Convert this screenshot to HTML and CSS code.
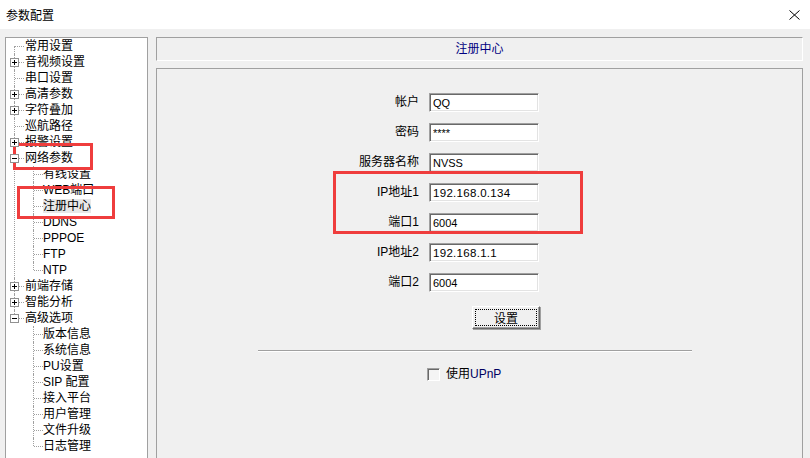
FILE: index.html
```html
<!DOCTYPE html>
<html lang="zh-CN">
<head>
    <meta charset="UTF-8">
    <title>参数配置</title>
    <link rel="stylesheet" href="styles.css">
</head>
<body>
    <div class="titlebar">
        <span class="title">参数配置</span>
        <svg class="close" width="11" height="10" viewBox="0 0 11 10">
            <path d="M0.5 0.5 L10.5 9.5 M10.5 0.5 L0.5 9.5" stroke="#000" stroke-width="1" fill="none"/>
        </svg>
    </div>
    <div class="content">
        <div class="tree-box">
            <ul class="tree">
                <li>常用设置</li>
                <li><span class="tog plus"></span>音视频设置</li>
                <li>串口设置</li>
                <li><span class="tog plus"></span>高清参数</li>
                <li><span class="tog plus"></span>字符叠加</li>
                <li>巡航路径</li>
                <li><span class="tog plus"></span>报警设置</li>
                <li><span class="tog"></span>网络参数
                    <ul>
                        <li>有线设置</li>
                        <li>WEB端口</li>
                        <li><span class="sel">注册中心</span></li>
                        <li>DDNS</li>
                        <li>PPPOE</li>
                        <li>FTP</li>
                        <li>NTP</li>
                    </ul>
                </li>
                <li><span class="tog plus"></span>前端存储</li>
                <li><span class="tog plus"></span>智能分析</li>
                <li><span class="tog"></span>高级选项
                    <ul>
                        <li>版本信息</li>
                        <li>系统信息</li>
                        <li>PU设置</li>
                        <li>SIP 配置</li>
                        <li>接入平台</li>
                        <li>用户管理</li>
                        <li>文件升级</li>
                        <li>日志管理</li>
                    </ul>
                </li>
            </ul>
        </div>
        <div class="right">
            <div class="header">注册中心</div>
            <div class="panel">
                <div class="form">
                    <label>帐户</label><input type="text" value="QQ" readonly>
                    <label>密码</label><input type="text" value="****" readonly>
                    <label>服务器名称</label><input type="text" value="NVSS" readonly>
                    <label>IP地址1</label><input type="text" class="ip" value="192.168.0.134" readonly>
                    <label>端口1</label><input type="text" value="6004" readonly>
                    <label>IP地址2</label><input type="text" class="ip" value="192.168.1.1" readonly>
                    <label>端口2</label><input type="text" value="6004" readonly>
                    <button class="btn"><span>设置</span></button>
                </div>
                <div class="sep"></div>
                <div class="check-row">
                    <span class="checkbox"></span>
                    <span>使用<span class="en">UPnP</span></span>
                </div>
            </div>
        </div>
    </div>

    <div class="mark mark-net"></div>
    <div class="mark mark-reg"></div>
    <div class="mark mark-ip"></div>
</body>
</html>
```

FILE: styles.css
```css
body {
    margin: 0;
    height: 458px;
    overflow: hidden;
    position: relative;
    background: #f0f0f0;
    font-family: "Liberation Sans", "Noto Sans CJK SC", sans-serif;
    font-size: 12px;
    color: #000;
}
.titlebar {
    height: 29px;
    background: #fff;
    display: flex;
    align-items: center;
    justify-content: space-between;
    padding: 0 10px 0 6px;
}
.title {
    font-size: 12px;
}
.content {
    display: flex;
    gap: 8px;
    padding: 8px 0 0 5px;
}
.tree-box {
    width: 143px;
    height: 421px;
    box-sizing: border-box;
    background: #fff;
    border: 1px solid #a0a0a0;
    border-bottom: none;
}
.tree, .tree ul {
    list-style: none;
    margin: 0;
    padding: 0;
}
.tree li {
    position: relative;
    padding-left: 19px;
    line-height: 16px;
    white-space: nowrap;
}
.tree ul li {
    padding-left: 18px;
}
.tree li::before {
    content: "";
    position: absolute;
    left: 8px;
    top: 0;
    bottom: 0;
    border-left: 1px dotted #a0a0a0;
}
.tree > li:first-child::before {
    top: 8px;
}
.tree li:last-child::before {
    bottom: auto;
    height: 8px;
}
.tree li::after {
    content: "";
    position: absolute;
    left: 9px;
    top: 8px;
    width: 9px;
    border-top: 1px dotted #a0a0a0;
}
.tog {
    position: absolute;
    left: 4px;
    top: 4px;
    width: 9px;
    height: 9px;
    box-sizing: border-box;
    border: 1px solid #919191;
    background: #fff;
    z-index: 1;
}
.tog::before {
    content: "";
    position: absolute;
    left: 1px;
    top: 3px;
    width: 5px;
    height: 1px;
    background: #000;
}
.tog.plus::after {
    content: "";
    position: absolute;
    left: 3px;
    top: 1px;
    width: 1px;
    height: 5px;
    background: #000;
}
.sel {
    background: #e8e8e8;
}
.right {
    width: 647px;
}
.header {
    height: 24px;
    box-sizing: border-box;
    border-top: 1px solid #a0a0a0;
    border-left: 1px solid #a0a0a0;
    border-right: 1px solid #fff;
    border-bottom: 1px solid #fff;
    line-height: 22px;
    text-align: center;
    color: #000080;
}
.panel {
    margin-top: 7px;
    height: 390px;
    box-sizing: border-box;
    border: 1px solid #a0a0a0;
    border-bottom: none;
    padding-top: 24px;
}
.form {
    display: grid;
    grid-template-columns: 120px 110px;
    grid-auto-rows: 19px;
    column-gap: 10px;
    row-gap: 11px;
    margin-left: 142px;
}
.form label {
    text-align: right;
    line-height: 19px;
}
.form input {
    height: 19px;
    width: 110px;
    box-sizing: border-box;
    margin: 0;
    padding: 0 0 0 3px;
    border-top: 1px solid #a0a0a0;
    border-left: 1px solid #a0a0a0;
    border-right: 1px solid #fff;
    border-bottom: 1px solid #fff;
    box-shadow: inset 1px 1px #696969, inset -1px -1px #e3e3e3;
    background: #fff;
    font-family: "Liberation Sans", sans-serif;
    font-size: 11px;
    color: #000;
    outline: none;
}
.form input.ip {
    font-size: 11.5px;
    letter-spacing: 0.3px;
}
.btn {
    grid-column: 2;
    justify-self: end;
    margin: 3px -1px 0 0;
    width: 68px;
    height: 23px;
    box-sizing: border-box;
    padding: 2px;
    background: #f0f0f0;
    border-top: 1px solid #fff;
    border-left: 1px solid #fff;
    border-right: 1px solid #696969;
    border-bottom: 1px solid #696969;
    box-shadow: inset -1px -1px #a0a0a0, 1px 1px #a0a0a0;
    font-family: "Noto Sans CJK SC", sans-serif;
    font-size: 12px;
    color: #000;
}
.btn span {
    display: block;
    height: 100%;
    box-sizing: border-box;
    border: 1px dotted #000;
    line-height: 15px;
}
.sep {
    margin: 28px 0 0 101px;
    width: 434px;
    height: 1px;
    background: #a0a0a0;
    border-bottom: 1px solid #fff;
}
.check-row {
    display: flex;
    align-items: center;
    gap: 6px;
    margin-top: 15px;
    padding-left: 270px;
    line-height: 14px;
}
.checkbox {
    width: 13px;
    height: 13px;
    box-sizing: border-box;
    border-top: 1px solid #a0a0a0;
    border-left: 1px solid #a0a0a0;
    border-right: 1px solid #fff;
    border-bottom: 1px solid #fff;
    box-shadow: inset 1px 1px #696969;
    background: #f4f4f4;
}
.en {
    color: #000060;
}
.mark {
    position: absolute;
    box-sizing: border-box;
    border: 3px solid #ef3d3d;
}
.mark-net {
    left: 13px;
    top: 143px;
    width: 80px;
    height: 27px;
}
.mark-reg {
    left: 17px;
    top: 186px;
    width: 98px;
    height: 33px;
}
.mark-ip {
    left: 333px;
    top: 171px;
    width: 250px;
    height: 63px;
}
```
